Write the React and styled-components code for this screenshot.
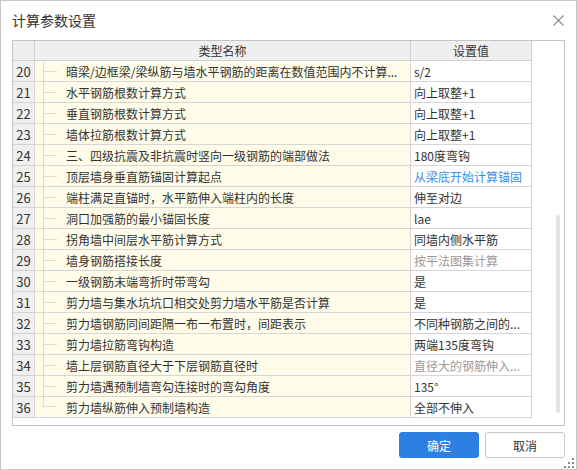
import React from "react";
import styled, { createGlobalStyle } from "styled-components";

const Global = createGlobalStyle`
  html, body { margin: 0; padding: 0; background: #ffffff; }
  body { font-family: "Noto Sans CJK SC", "Noto Sans", sans-serif; color: #333; }
  * { box-sizing: border-box; }
`;

const Dialog = styled.div`
  position: relative;
  width: 577px;
  height: 470px;
  border: 1px solid #c6c6c6;
  background: #fff;
  display: flex;
  flex-direction: column;
`;

const TitleBar = styled.div`
  height: 39px;
  display: flex;
  align-items: center;
  justify-content: space-between;
  padding: 0 12px 0 11px;
`;

const Title = styled.div`
  font-size: 14px;
  color: #333;
  line-height: 1;
  padding-bottom: 1px;
`;

const CloseButton = styled.button`
  width: 12px;
  height: 12px;
  padding: 0;
  border: none;
  background: transparent;
  display: flex;
  align-items: center;
  justify-content: center;
  cursor: pointer;
`;

const TableFrame = styled.div`
  margin: 0 11px 0 11px;
  height: 386px;
  border: 1px solid #c4c4c4;
  display: flex;
`;

const Grid = styled.div`
  display: grid;
  grid-template-columns: 22px 376px 121px;
  grid-template-rows: 20px;
  grid-auto-rows: 21px;
  align-content: start;
  width: 519px;
`;

const HeadCell = styled.div`
  background: #efefef;
  border-right: 1px solid #cfcfcf;
  border-bottom: 1px solid #cfcfcf;
  font-size: 12px;
  display: flex;
  align-items: center;
  justify-content: center;
  color: #333;
`;

const NumCell = styled.div`
  background: #f0f0f0;
  border-right: 1px solid #d2d2d2;
  border-bottom: 1px solid #d2d2d2;
  font-size: 13px;
  display: flex;
  align-items: center;
  justify-content: center;
  color: #333;
`;

const NameCell = styled.div`
  background: #fffdea;
  border-right: 1px solid #d6d6d6;
  border-bottom: 1px solid #d6d6d6;
  display: flex;
  align-items: stretch;
  padding-left: 8px;
  min-width: 0;
`;

const TreeGuide = styled.span`
  flex: 0 0 14px;
  align-self: flex-start;
  height: ${(p) => (p.$last ? "50%" : "calc(100% + 1px)")};
  border-left: 1px solid #dadada;
  background: linear-gradient(#dadada, #dadada) no-repeat left bottom / 100% 1px;
  ${(p) => (p.$last ? "" : "background-position: left 10px;")}
`;

const NameText = styled.span`
  margin-left: 9px;
  font-size: 12px;
  white-space: nowrap;
  overflow: hidden;
  display: flex;
  align-items: center;
  color: #333;
`;

const ValueCell = styled.div`
  background: #fff;
  border-right: 1px solid #d6d6d6;
  border-bottom: 1px solid #d6d6d6;
  font-size: 12px;
  padding-left: 3px;
  display: flex;
  align-items: center;
  white-space: nowrap;
  overflow: hidden;
  color: ${(p) => (p.$tone === "link" ? "#3a8ee8" : p.$tone === "muted" ? "#9a9a9a" : "#333")};
`;

const ScrollTrack = styled.div`
  flex: 1;
  display: flex;
  flex-direction: column;
  align-items: flex-start;
  padding-left: 24px;
  padding-top: 174px;
`;

const ScrollThumb = styled.div`
  width: 4px;
  height: 198px;
  border-radius: 2px;
  background: #e4e4e4;
`;

const Footer = styled.div`
  display: flex;
  justify-content: flex-end;
  gap: 6px;
  padding: 6px 11px 0 0;
`;

const Button = styled.button`
  width: 80px;
  height: 26px;
  border-radius: 3px;
  font-family: "Noto Sans CJK SC", "Noto Sans", sans-serif;
  font-size: 12px;
  cursor: pointer;
  padding: 0;
  border: 1px solid ${(p) => (p.$primary ? "#2d7fe2" : "#c9c9c9")};
  background: ${(p) => (p.$primary ? "#2d7fe2" : "#fff")};
  color: ${(p) => (p.$primary ? "#fff" : "#333")};
`;

const Grip = styled.svg`
  position: absolute;
  right: 2px;
  bottom: 1px;
`;

const rows = [
  [20, "暗梁/边框梁/梁纵筋与墙水平钢筋的距离在数值范围内不计算...", "s/2"],
  [21, "水平钢筋根数计算方式", "向上取整+1"],
  [22, "垂直钢筋根数计算方式", "向上取整+1"],
  [23, "墙体拉筋根数计算方式", "向上取整+1"],
  [24, "三、四级抗震及非抗震时竖向一级钢筋的端部做法", "180度弯钩"],
  [25, "顶层墙身垂直筋锚固计算起点", "从梁底开始计算锚固", "link"],
  [26, "端柱满足直锚时，水平筋伸入端柱内的长度", "伸至对边"],
  [27, "洞口加强筋的最小锚固长度", "lae"],
  [28, "拐角墙中间层水平筋计算方式", "同墙内侧水平筋"],
  [29, "墙身钢筋搭接长度", "按平法图集计算", "muted"],
  [30, "一级钢筋末端弯折时带弯勾", "是"],
  [31, "剪力墙与集水坑坑口相交处剪力墙水平筋是否计算", "是"],
  [32, "剪力墙钢筋同间距隔一布一布置时，间距表示", "不同种钢筋之间的..."],
  [33, "剪力墙拉筋弯钩构造", "两端135度弯钩"],
  [34, "墙上层钢筋直径大于下层钢筋直径时", "直径大的钢筋伸入...", "muted"],
  [35, "剪力墙遇预制墙弯勾连接时的弯勾角度", "135°"],
  [36, "剪力墙纵筋伸入预制墙构造", "全部不伸入"],
];

export default function App() {
  return (
    <>
      <Global />
      <Dialog>
        <TitleBar>
          <Title>计算参数设置</Title>
          <CloseButton aria-label="关闭">
            <svg width="11" height="11" viewBox="0 0 11 11">
              <path d="M0.5 0.5 L10.5 10.5 M10.5 0.5 L0.5 10.5" stroke="#8a8a8a" strokeWidth="1.1" fill="none" />
            </svg>
          </CloseButton>
        </TitleBar>
        <TableFrame>
          <Grid>
            <HeadCell />
            <HeadCell>类型名称</HeadCell>
            <HeadCell>设置值</HeadCell>
            {rows.map(([n, name, value, tone], i) => (
              <React.Fragment key={n}>
                <NumCell>{n}</NumCell>
                <NameCell>
                  <TreeGuide $last={i === rows.length - 1} />
                  <NameText>{name}</NameText>
                </NameCell>
                <ValueCell $tone={tone}>{value}</ValueCell>
              </React.Fragment>
            ))}
          </Grid>
          <ScrollTrack>
            <ScrollThumb />
          </ScrollTrack>
        </TableFrame>
        <Footer>
          <Button $primary>确定</Button>
          <Button>取消</Button>
        </Footer>
        <Grip width="10" height="10" viewBox="0 0 10 10">
          <rect x="8" y="0" width="2" height="2" fill="#8c8c8c" />
          <rect x="4" y="4" width="2" height="2" fill="#8c8c8c" />
          <rect x="8" y="4" width="2" height="2" fill="#8c8c8c" />
          <rect x="0" y="8" width="2" height="2" fill="#8c8c8c" />
          <rect x="4" y="8" width="2" height="2" fill="#8c8c8c" />
          <rect x="8" y="8" width="2" height="2" fill="#8c8c8c" />
        </Grip>
      </Dialog>
    </>
  );
}
